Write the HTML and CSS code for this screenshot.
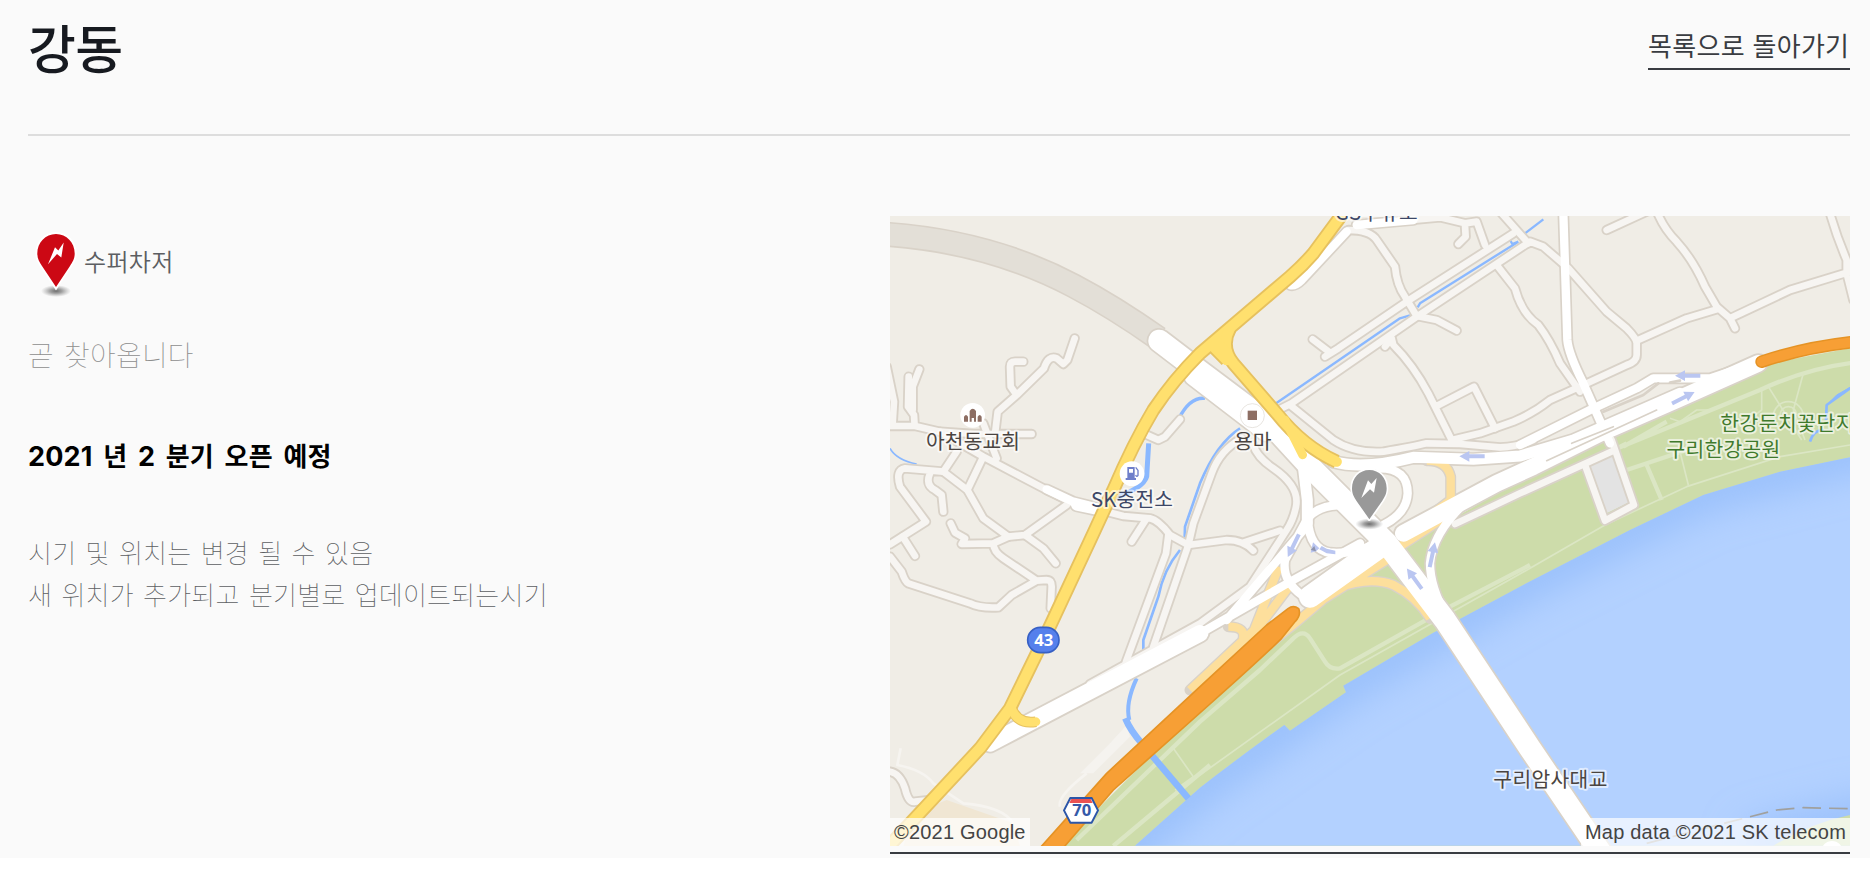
FILE: index.html
```html
<!DOCTYPE html>
<html lang="ko">
<head>
<meta charset="utf-8">
<title>강동</title>
<link rel="stylesheet" href="styles.css">
</head>
<body>
<main class="page">
  <header class="head">
    <h1 class="title">강동</h1>
    <a class="back" href="#">목록으로 돌아가기</a>
  </header>
  <div class="columns">
    <section class="info">
      <div class="kind">
        <svg class="pin" viewBox="0 0 56 68" width="56" height="68">
          <defs>
            <radialGradient id="shade"><stop offset="0" stop-color="#555" stop-opacity=".85"/><stop offset=".4" stop-color="#666" stop-opacity=".6"/><stop offset="1" stop-color="#888" stop-opacity="0"/></radialGradient>
          </defs>
          <ellipse cx="28" cy="60" rx="15" ry="6" fill="url(#shade)"/>
          <path d="M28 3C38.500 3 46.700 11.500 46.700 22.500C46.700 28 44.500 31 42 35L28 56L14 35C11.500 31 9.300 28 9.300 22.500C9.300 11.500 17.500 3 28 3Z" fill="#cc0814" stroke="#fff" stroke-width="4" paint-order="stroke"/>
          <path d="M35.700 11.500L33.300 26.500L29 23L20 33.300L27 16.300L30.300 19.500Z" fill="#fff"/>
        </svg>
        <span class="kind-name">수퍼차저</span>
      </div>
      <p class="soon">곧 찾아옵니다</p>
      <p class="opening"><span class="num">2021</span> 년 <span class="num">2</span> 분기 오픈 예정</p>
      <p class="note">시기 및 위치는 변경 될 수 있음<br>새 위치가 추가되고 분기별로 업데이트되는시기</p>
    </section>
    <a class="map" href="#">
      <svg class="map-art" viewBox="30 18 2880 1890" width="960" height="630">
        <defs>
          <path id="water" d="M2910 742L2700 785L2470 855L2250 960L1920 1130L1730 1232L1660 1268L1390 1427L1398 1447L1230 1562L1213 1545Q1080 1640 960 1733L765 1907H2910Z"/>
          <clipPath id="river"><use href="#water"/></clipPath>
          <filter id="soft" filterUnits="userSpaceOnUse" x="0" y="0" width="3300" height="2300"><feGaussianBlur stdDeviation="60"/></filter>
          <g id="lanes">
            <path d="M30 648H105L180 665L280 672H455M20 470L42 575L38 640M86 500L84 590L102 615L104 648M118 478L98 530V600"/>
            <path d="M345 672L353 605L410 555L492 475Q505 435 530 445L550 462L562 450L584 385M410 555L392 530L390 470Q390 455 405 455H430"/>
            <path d="M180 665L310 740L500 840L580 880M310 640L350 745M310 740L262 840M230 725L190 785"/>
            <path d="M190 785L75 775Q45 780 60 830L138 935L30 1003M190 785L262 840L310 925L385 980L435 975L560 885M150 790Q135 825 165 840L185 855L190 905"/>
            <path d="M212 940L225 968L255 985L245 1002L340 1000L385 980M340 1000Q340 1025 370 1045L470 1112L395 1155L355 1192Q300 1195 270 1180L85 1120Q75 1115 65 1085L30 1040M470 1112L500 1110Q515 1110 515 1130L512 1195"/>
            <path d="M435 975L490 1015L527 1060M68 980L105 1038M680 905L730 918L810 925Q835 930 870 975L925 1005L1040 990Q1090 990 1120 1022M1090 998L1200 962M800 925L755 995"/>
            <path d="M1085 685Q1020 720 995 790L940 940L925 1005L820 1310M865 975L858 1030L738 1355M30 1685Q60 1690 75 1735Q85 1780 105 1775L150 1770"/>
            <path d="M1120 705Q1130 740 1180 775Q1260 830 1248 890Q1240 930 1220 960L1110 1130L960 1240L630 1422M790 670L835 690L855 680L900 628"/>
            <path d="M1298 388L1350 428M1335 440L1375 415L1580 275L1900 70M1195 600L1235 580L1610 320L1950 95L1990 110L2065 175L2180 305L2240 355Q2270 385 2270 400V435Q2270 455 2240 465L2110 525L2010 570Q1960 610 1900 635L1800 670L1715 690"/>
            <path d="M1405 60Q1470 60 1490 90L1545 170Q1550 225 1575 260L1610 318L1670 330L1730 362M1515 410L1535 385L1540 405Q1600 465 1645 550L1715 690M1670 588L1782 530L1845 655"/>
            <path d="M1230 585L1360 690Q1420 730 1510 725Q1600 710 1640 700L1740 702L1860 712Q1920 710 1960 690M1850 165L1905 235Q1925 310 1975 345Q2010 390 2040 460L2100 545"/>
            <path d="M1430 45L1680 22L1755 40L1790 35L1815 105M1755 45L1757 80L1735 102M1865 10L1945 100M2180 60L2300 5"/>
            <path d="M2335 15Q2355 60 2390 95Q2440 150 2475 230L2510 290L2550 325L2565 355M2275 390L2420 325L2510 298M2550 325L2730 240L2910 185M2850 10Q2870 80 2900 150V190L2920 270"/>
            <path d="M2195 690L2262 885L2175 932L2115 765M2205 720L1920 850L1725 942"/>
          </g>
          <g id="ramps">
            <path d="M1640 752Q1700 750 1712 800V870L1560 985M1690 925L1540 1022M1520 1050L1420 1112L1330 1168L1245 1240L1125 1335M1370 1135Q1470 1098 1540 1125Q1610 1160 1650 1225"/>
            <path d="M1197 1070L1120 1265M1235 1120L1110 1285M1045 1250Q1100 1250 1088 1290M1120 1262L930 1440"/>
          </g>
          <g id="avenues">
            <path d="M2050 10L2062 390Q2065 430 2110 520L2190 700M1430 45L1600 30"/>
            <path d="M1500 775Q1583 775 1583 850Q1580 910 1510 945M1280 930Q1310 885 1390 885M1800 840Q1660 950 1650 1060Q1650 1130 1700 1220"/>
            <path d="M1280 930L1215 1050Q1205 1110 1265 1155M1270 960L1040 1230M960 1270L1240 1110L1440 1000"/>
            <path d="M1400 65L1265 210Q1245 230 1230 225M500 838L580 875L680 900M1920 705L2130 600L2270 535L2320 505H2490L2640 455"/>
          </g>
          <g id="mid">
            <path d="M1270 770L1282 870V940M1360 755Q1450 780 1600 742L1780 748L1920 738L2080 690L2400 550"/>
            <path d="M590 885L670 902"/>
          </g>
          <g id="loop">
            <path d="M1283 930Q1290 1020 1350 1028Q1420 1035 1520 990"/>
          </g>
          <g id="highway">
            <path d="M330 1600L960 1270M1570 970L1850 820L1960 770L2160 670L2400 565L2635 460"/>
          </g>
          <g id="trunk">
            <path d="M838 392L960 485L1180 650L1290 770L1520 1000L1695 1230L1950 1615L2160 1925M1290 1160L1515 1000M945 495L1160 660"/>
          </g>
          <g id="yellow">
            <path d="M1385 15L1300 130Q1270 165 1230 200L960 430Q880 510 820 600Q760 700 700 840L640 970L500 1270L390 1495L300 1615L30 1905"/>
            <path d="M1050 355Q1020 410 1060 460L1190 610Q1270 710 1370 755"/>
            <path d="M1000 410L1040 450M1010 395L1040 430"/>
          </g>
          <path id="arrow" d="M-38 0L-8 -16V-6H38V6H-8V16Z"/>
        </defs>

        <rect x="30" y="18" width="2880" height="1890" fill="#f0ede6"/>
        <path d="M100 1810L200 1770L400 1840L420 1910H70Z" fill="#f0e6d3"/>
        <path d="M600 1690L690 1600L740 1545L750 1580L640 1690Z" fill="#f5f3ef"/>
        <path d="M62 1615L52 1665Q130 1680 160 1720L250 1780Q370 1790 400 1840M540 1790Q530 1760 620 1690" class="faint"/>
        <path d="M20 73Q330 95 580 227Q700 290 835 385" class="tunnel-edge"/>
        <path d="M20 73Q330 95 580 227Q700 290 835 385" class="tunnel"/>

        <path d="M2910 415L2640 465L2400 560L1920 810L1540 1030L1190 1280L960 1490L540 1910H2910Z" fill="#cddcaa"/>
        <g class="trail">
          <path d="M2920 458Q2780 475 2640 540L2200 720M2230 710L2360 635M2210 715L2240 700M1540 1000L1750 880M1950 1065L1700 1195L1380 1375Q1350 1380 1335 1355L1290 1285Q1270 1255 1240 1285L1140 1380L960 1535L590 1890M990 1665L700 1908M2240 780L2420 720M2300 765L2345 870"/>
        </g>
        <g class="path">
          <path d="M2910 705L2700 740L2420 830L2175 945L1950 1075L1380 1395L960 1695M2395 705L2425 825M2645 535L2665 530L2765 690M2645 535V600L2580 650M2770 490L2740 600L2775 690M2370 625L2400 635L2450 600L2500 600L2560 570M880 1615L940 1700L885 1740M2680 620A45 45 0 0 1 2770 620M2700 615A25 25 0 0 1 2750 615"/>
        </g>
        <use href="#water" fill="#b3d1ff"/>
        <g clip-path="url(#river)">
          <path d="M3100 670L2910 725L2470 840L1920 1115L1390 1420L960 1720L630 2000" fill="none" stroke="#8fb9fa" stroke-width="95" filter="url(#soft)"/>
          <path d="M3100 1800L2910 1830L2600 1910" fill="none" stroke="#8fb9fa" stroke-width="90" filter="url(#soft)"/>
        </g>
        <path d="M2910 1815Q2790 1840 2680 1907H2910Z" fill="#cddcaa"/>
        <circle cx="2856" cy="1925" r="32" fill="#fff"/>
        <path d="M2300 1900L2540 1838L2690 1800L2770 1793L2910 1796" fill="none" stroke="#a0a09e" stroke-width="5" stroke-dasharray="56 24"/>

        <g class="stream">
          <path d="M30 715Q50 750 110 762" stroke-width="5"/>
          <path d="M1080 655Q1010 700 960 820L915 950L914 985" stroke-width="8"/>
          <path d="M900 1020Q850 1080 835 1160L790 1290V1320" stroke-width="8"/>
          <path d="M770 1405Q735 1480 748 1530" stroke-width="12"/>
          <path d="M736 1525Q750 1560 785 1600L925 1765" stroke-width="20"/>
          <path d="M975 565Q930 560 897 625" stroke-width="10"/>
          <path d="M806 700L800 800Q790 835 700 865" stroke-width="15"/>
          <path d="M1185 582L1560 325L1590 316M1613 292L1620 280L1915 95M1890 90L1897 102L1915 95M1935 70L1990 28" stroke-width="7"/>
          <path d="M2910 535L2840 585L2838 630M2830 660Q2800 660 2790 695" stroke-width="8"/>
          <path d="M2910 532L2870 555L2850 575L2895 548Z" fill="#8ab8ff" stroke-width="3"/>
        </g>

        <path d="M2125 760L2200 735L2250 875L2180 910Z" fill="#e3e3e3"/>

        <use href="#lanes" class="edge" stroke-width="31"/>
        <use href="#ramps" class="edge" stroke-width="33"/>
        <use href="#avenues" class="edge" stroke-width="35"/>
        <use href="#loop" class="edge" stroke-width="35"/>
        <use href="#mid" class="edge" stroke-width="43"/>
        <use href="#highway" class="edge" stroke-width="61"/>
        <use href="#trunk" class="edge" stroke-width="76"/>
        <use href="#lanes" class="lane" stroke-width="20"/>
        <use href="#ramps" class="ramp" stroke-width="25"/>
        <use href="#avenues" class="road" stroke-width="25"/>
        <use href="#loop" class="road" stroke-width="26"/>
        <use href="#mid" class="road" stroke-width="33"/>
        <use href="#highway" class="road" stroke-width="50"/>
        <use href="#trunk" class="road" stroke-width="66"/>
        <path d="M2000 752L2330 600M2075 700L2200 650" class="edge" stroke-width="5"/>
        <path d="M2170 605L2290 555L2335 520M2370 518L2400 512" class="edge" stroke-width="8"/>

        <use href="#yellow" fill="none" stroke="#e6c15f" stroke-width="42"/>
        <path d="M393 1490Q410 1545 468 1535" fill="none" stroke="#e6c15f" stroke-width="32"/>
        <use href="#yellow" fill="none" stroke="#ffe06e" stroke-width="31" stroke-linecap="round"/>
        <path d="M393 1490Q410 1545 468 1535M1215 630L1240 680L1268 735" class="yellow-end"/>

        <path d="M1224 1196Q1240 1184 1256 1196Q1264 1214 1246 1234L1205 1285Q1150 1340 990 1482L700 1740L540 1925L470 1925L680 1690L960 1430L1160 1245Z" class="orange-body"/>
        <path d="M2645 455Q2780 410 2930 395" class="orange-edge" stroke-width="38"/>
        <path d="M2645 455Q2780 410 2930 395" class="orange" stroke-width="29"/>

        <g fill="#bac6f1">
          <use href="#arrow" transform="translate(2423 497)"/>
          <use href="#arrow" transform="translate(2410 563) rotate(153)"/>
          <use href="#arrow" transform="translate(1776 739)"/>
          <use href="#arrow" transform="translate(1240 1007) rotate(-64)"/>
          <use href="#arrow" transform="translate(1657 1034) rotate(102)"/>
          <use href="#arrow" transform="translate(1603 1106) rotate(54)"/>
          <path d="M1292 1028L1299 997L1318 1015L1308 1024ZM1325 1008L1340 1016L1366 1022V1033L1340 1030L1318 1018Z"/>
        </g>
        <path d="M1292 1020L1303 1008L1308 1024Z" fill="#8d93ad"/>

        <circle cx="278" cy="616" r="37" fill="#fff"/>
        <path d="M252 635V620Q258 610 264 620V635ZM269 635V603Q278 590 288 603V635H282V624H275V635ZM293 635V620Q299 610 305 620V635Z" fill="#8d6e63"/>
        <circle cx="756" cy="791" r="37" fill="#fff"/>
        <path d="M742 771H764V804H768V810H737V804H742ZM747 777V788H759V777Z" fill="#6f7fca" fill-rule="evenodd"/>
        <path d="M767 772L774 781V796Q770 803 767 795" fill="none" stroke="#6f7fca" stroke-width="4"/>
        <circle cx="1117" cy="617" r="36" fill="#fff" stroke="#ddd8d0" stroke-width="2"/>
        <rect x="1103" y="602" width="28" height="28" fill="#8d6e63"/>

        <rect x="443" y="1252" width="94" height="76" rx="38" fill="#5580ec" stroke="#3760c4" stroke-width="5"/>
        <text x="491" y="1307" class="shield" fill="#fff">43</text>
        <path d="M552 1801L571 1764H635L654 1801L635 1838H571Z" fill="#fff" stroke="#2c56a8" stroke-width="6"/>
        <path d="M574 1767H632L638 1779H568Z" fill="#eb5252"/>
        <text x="605" y="1818" class="shield" fill="#3559a8">70</text>

        <g class="label">
          <text x="279" y="717" textLength="282">아천동교회</text>
          <text x="756" y="892" textLength="246" fill="#3d4766">SK충전소</text>
          <text x="1118" y="717" textLength="112">용마</text>
          <text x="1489" y="30" textLength="248" fill="#3d4766">GS주유소</text>
          <text x="2011" y="1730" textLength="342">구리암사대교</text>
          <text x="2722" y="662" textLength="402" class="green">한강둔치꽃단지</text>
          <text x="2530" y="741" textLength="341" class="green">구리한강공원</text>
        </g>

        <g>
          <ellipse cx="1468" cy="942" rx="42" ry="17" fill="url(#shade)"/>
          <path d="M1468 780C1498 780 1520 804 1520 835C1520 852 1514 861 1507 872L1468 928L1429 872C1422 861 1416 852 1416 835C1416 804 1438 780 1468 780Z" fill="#999" stroke="#fff" stroke-width="10" paint-order="stroke"/>
          <path d="M1490 804L1482 848L1470 838L1444 864L1464 811L1474 822Z" fill="#fff"/>
        </g>
      </svg>
      <span class="credit credit-left">©2021 Google</span>
      <span class="credit credit-right">Map data ©2021 SK telecom</span>
    </a>
  </div>
</main>
</body>
</html>
```
FILE: styles.css
```css
* { box-sizing: border-box; }

body {
  margin: 0;
  background: #fff;
  font-family: "Noto Sans CJK KR", sans-serif;
}

.page {
  height: 858px;
  padding: 0 20px 0 28px;
  background: #fafafa;
}

.head {
  display: flex;
  justify-content: space-between;
  align-items: flex-start;
  height: 136px;
  border-bottom: 2px solid #ddd;
}

.title {
  margin: 10px 0 0;
  font-size: 52px;
  line-height: 74px;
  font-weight: 500;
  letter-spacing: -0.5px;
  color: #171a20;
}

.back {
  margin-top: 24px;
  width: 202px;
  height: 46px;
  border-bottom: 2px solid #393c41;
  font-size: 26px;
  line-height: 41px;
  letter-spacing: 0.3px;
  white-space: nowrap;
  color: #393c41;
  text-decoration: none;
}

.columns {
  display: flex;
  justify-content: space-between;
  padding-top: 80px;
}

.info { padding-top: 15px; }

.info p { margin: 0; white-space: nowrap; }

.kind { display: flex; height: 68px; }

.kind-name {
  font-size: 24px;
  line-height: 60px;
  font-weight: 350;
  letter-spacing: 0.3px;
  color: #5c5e62;
}

.info .soon {
  margin-top: 33px;
  font-size: 28px;
  line-height: 44px;
  font-weight: 100;
  letter-spacing: 0.2px;
  word-spacing: 2px;
  color: #8e8e8e;
}

.info .opening {
  margin-top: 57px;
  height: 43px;
  font-size: 26px;
  line-height: 44px;
  font-weight: 700;
  letter-spacing: 0.2px;
  word-spacing: 3.1px;
  color: #000;
}

.num {
  font-family: Inter, sans-serif;
  font-size: 27px;
}

.info .note {
  margin-top: 55px;
  font-size: 26px;
  line-height: 42px;
  font-weight: 100;
  letter-spacing: 0.21px;
  word-spacing: 1.8px;
  color: #5c5e62;
}

.map {
  position: relative;
  width: 960px;
  height: 638px;
  border-bottom: 2px solid #393c41;
  text-decoration: none;
}

.map-art { display: block; }

.map-art path { stroke-linejoin: round; }

.tunnel, .tunnel-edge, .faint, .trail, .path, .stream, .edge, .lane, .ramp, .road, .orange, .orange-edge, .yellow-end {
  fill: none;
  stroke-linejoin: round;
}

.tunnel-edge { stroke: #d9d2c8; stroke-width: 76px; }
.tunnel { stroke: #e3dfd7; stroke-width: 66px; }
.faint { stroke: #f6f4f0; stroke-width: 8px; }
.trail { stroke: #dbe6c4; stroke-width: 13px; }
.path { stroke: #dbe6c4; stroke-width: 5px; }
.stream { stroke: #8ab8ff; }
.edge { stroke: #d9d2c8; stroke-linecap: round; }
.lane { stroke: #f7f5f2; stroke-linecap: round; }
.ramp { stroke: #fddf9c; }
.road { stroke: #fff; stroke-linecap: round; }
.yellow-end { stroke: #ffe06e; stroke-width: 26px; stroke-linecap: round; }
.orange-edge { stroke: #e59325; stroke-linecap: round; }
.orange { stroke: #f79f35; stroke-linecap: round; }
.orange-body { fill: #f79f35; stroke: #e59325; stroke-width: 5px; }

.label {
  font-size: 61px;
  text-anchor: middle;
  fill: #4a4441;
  stroke: rgba(255, 255, 255, 0.6);
  stroke-width: 12px;
  stroke-linejoin: round;
  paint-order: stroke;
}

.green { fill: #3f7a2c; }

.shield {
  font-family: "Noto Sans", sans-serif;
  font-size: 50px;
  font-weight: 700;
  text-anchor: middle;
}

.credit {
  position: absolute;
  bottom: 6px;
  height: 28px;
  padding: 0 4px;
  background: rgba(255, 255, 255, 0.7);
  font-family: "Liberation Sans", sans-serif;
  font-size: 20px;
  line-height: 29px;
  letter-spacing: 0.2px;
  white-space: nowrap;
  color: #444;
}

.credit-left { left: 0; }
.credit-right { right: 0; }
```
